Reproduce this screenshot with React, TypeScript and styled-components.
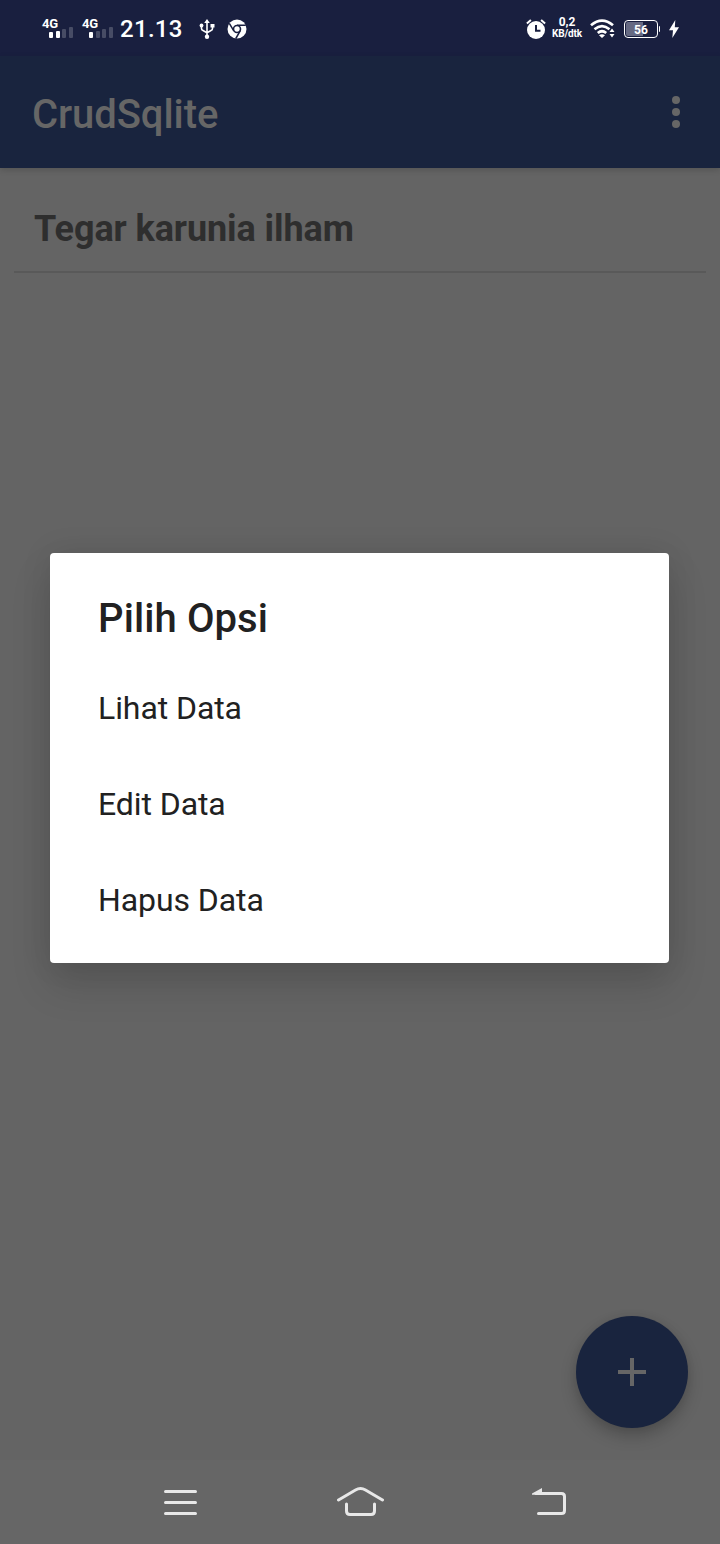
import React from "react";
import styled, { createGlobalStyle } from "styled-components";

const GlobalStyle = createGlobalStyle`
  *, *::before, *::after { box-sizing: border-box; }
  body { margin: 0; background: #646464; font-family: Roboto, sans-serif; }
  svg { display: block; flex: none; }
`;

const Screen = styled.div`
  position: relative;
  width: 720px;
  height: 1544px;
  display: flex;
  flex-direction: column;
  overflow: hidden;
  background: #646464;
`;

const StatusBar = styled.div`
  height: 56px;
  flex: none;
  display: flex;
  justify-content: space-between;
  align-items: center;
  padding: 1px 40px 0 42px;
  background: #191f3f;
  color: #fff;
`;

const StatusGroup = styled.div`
  display: flex;
  align-items: center;
`;

const Signal = styled.div`
  width: 32px;
  height: 22px;
  margin-right: 8px;
  padding-right: 1px;
  display: flex;
  flex-direction: column;
`;

const SignalLabel = styled.span`
  height: 11px;
  font-size: 13px;
  line-height: 11px;
  font-weight: 700;
  letter-spacing: -0.3px;
`;

const SignalBars = styled.div`
  display: flex;
  align-items: flex-end;
  justify-content: flex-end;
  gap: 2.7px;
  height: 11px;
  margin-top: -2px;
`;

const SignalBar = styled.span<{ $height: number; $on: boolean }>`
  width: 4px;
  height: ${(p) => p.$height}px;
  border-radius: 1px;
  background: ${(p) => (p.$on ? "#fff" : "#474c65")};
`;

const Clock = styled.span`
  width: 79px;
  margin-left: -2px;
  font-size: 24px;
  line-height: 28px;
  font-weight: 500;
  letter-spacing: 0.3px;
`;

const StatusIcons = styled.div`
  display: flex;
  gap: 12px;
  align-items: center;
`;

const NetSpeed = styled.div`
  width: 32px;
  margin: -1px 7px 0 5px;
  display: flex;
  flex-direction: column;
  align-items: center;
  font-weight: 700;
  white-space: nowrap;
`;

const SpeedValue = styled.span`
  font-size: 12px;
  line-height: 11px;
`;

const SpeedUnit = styled.span`
  font-size: 10px;
  line-height: 11px;
  letter-spacing: -0.1px;
`;

const Battery = styled.div`
  position: relative;
  width: 34px;
  height: 18px;
  margin: 0 10px 0 8px;
  padding: 1px;
  border: 1.5px solid #fff;
  border-radius: 4px;
  display: flex;
  align-items: center;
  justify-content: center;
  background: linear-gradient(to right, #666a83 56%, transparent 56%) content-box;
  font-size: 12px;
  font-weight: 700;
  line-height: 14px;

  &::after {
    content: "";
    position: absolute;
    right: -3px;
    top: 5px;
    width: 1.5px;
    height: 6px;
    border-radius: 0 1px 1px 0;
    background: #fff;
  }
`;

const BatteryLevel = styled.span`
  padding-top: 2px;
`;

const AppBar = styled.header`
  height: 112px;
  flex: none;
  position: relative;
  display: flex;
  align-items: center;
  justify-content: space-between;
  padding: 0 40px 0 32px;
  background: #19243e;
  color: #666;
  box-shadow: 0 2px 6px rgba(0, 0, 0, 0.16);
`;

const AppTitle = styled.h1`
  margin: 6px 0 0;
  font-size: 40px;
  line-height: 48px;
  font-weight: 500;
  letter-spacing: -0.08px;
`;

const Content = styled.main`
  flex: 1;
  padding: 0 14px;
`;

const ListRow = styled.div`
  height: 105px;
  padding: 40px 20px 0;
  border-bottom: 2px solid #595959;
  font-size: 36px;
  line-height: 42px;
  font-weight: 700;
  letter-spacing: -0.09px;
  color: #2e2e2e;
`;

const NavBar = styled.nav`
  height: 84px;
  flex: none;
  display: flex;
  align-items: center;
  padding-left: 163px;
  background: #666;
`;

const NavItem = styled.div<{ $before?: number }>`
  margin-left: ${(p) => p.$before ?? 0}px;
`;

const AddButton = styled.div`
  position: absolute;
  right: 32px;
  bottom: 116px;
  width: 112px;
  height: 112px;
  border-radius: 50%;
  display: flex;
  align-items: center;
  justify-content: center;
  background: #19243e;
  box-shadow: 0 8px 16px rgba(0, 0, 0, 0.22), 0 0 8px rgba(0, 0, 0, 0.06);
`;

const Dialog = styled.section`
  position: absolute;
  left: 50px;
  top: 553px;
  width: 619px;
  height: 410px;
  padding: 42px 48px 0;
  border-radius: 4px;
  background: #fff;
  color: #212121;
  box-shadow: 0 22px 40px rgba(0, 0, 0, 0.14), 0 0 32px rgba(0, 0, 0, 0.09);
`;

const DialogTitle = styled.h2`
  margin: 0 0 17px;
  font-size: 40px;
  line-height: 48px;
  font-weight: 500;
  letter-spacing: 0.1px;
`;

const Option = styled.div`
  height: 96px;
  display: flex;
  align-items: center;
  font-size: 32px;
  line-height: 38px;
  letter-spacing: -0.08px;
`;

const levels = [6, 7, 9, 11];

function SignalStrength({ active }: { active: number }) {
  return (
    <Signal>
      <SignalLabel>4G</SignalLabel>
      <SignalBars>
        {levels.map((h, i) => (
          <SignalBar key={h} $height={h} $on={i < active} />
        ))}
      </SignalBars>
    </Signal>
  );
}

const UsbIcon = () => (
  <svg width="16" height="20" viewBox="0 0 16 20" fill="none" stroke="#fff" strokeWidth="1.6">
    <path d="M8 3v14M2.500 7v2.500Q2.500 11 4 11.600L8 13.700M13.500 7v2.500Q13.500 11 12 11.600L8 13.700" />
    <path d="M8 0l2.800 4H5.200zM11.500 5h4v3.500h-4z" fill="#fff" stroke="none" />
    <circle cx="2.500" cy="6.500" r="1.900" fill="#fff" stroke="none" />
    <circle cx="8" cy="17.700" r="2.200" fill="#fff" stroke="none" />
  </svg>
);

const ChromeIcon = () => (
  <svg width="20" height="20" viewBox="0 0 20 20">
    <circle cx="10" cy="10" r="9.500" fill="#fff" />
    <circle cx="10" cy="10" r="3.500" fill="none" stroke="#191f3f" strokeWidth="1.600" />
    <path d="M10 6.300h8.800M6.800 11.900L2.300 4.300M13.200 11.900l-4.400 7.600" stroke="#191f3f" strokeWidth="1.500" />
  </svg>
);

const AlarmIcon = () => (
  <svg width="20" height="20" viewBox="0 0 20 20">
    <circle cx="10" cy="11" r="9" fill="#fff" />
    <path d="M.9 4.500l4-3.500M19.100 4.500l-4-3.500" stroke="#fff" strokeWidth="2" />
    <path d="M10 6v5.700h4.500" fill="none" stroke="#191f3f" strokeWidth="2" />
  </svg>
);

const WifiIcon = () => (
  <svg width="26" height="20" viewBox="0 0 26 20" fill="none" stroke="#fff" strokeWidth="2.700">
    <path d="M1 6.300Q12 -3 23 6.300M4.500 10.300Q12 4 19.500 10.300M7.800 14Q12 10.500 16.200 14" />
    <path d="M12 19l-3-2.800q3-2 6 0zM22 9.500l2.500 3.500h-5zM22 18.500l2.500-3.500h-5z" fill="#fff" stroke="none" />
  </svg>
);

const BoltIcon = () => (
  <svg width="12" height="18" viewBox="0 0 12 18">
    <path d="M7.300 0L1 10.300h4L4.300 18 11 7.300H6.800z" fill="#fff" />
  </svg>
);

const MoreIcon = () => (
  <svg width="8" height="32" viewBox="0 0 8 32" fill="#666">
    <circle cx="4" cy="4" r="4" />
    <circle cx="4" cy="16" r="4" />
    <circle cx="4" cy="28" r="4" />
  </svg>
);

const PlusIcon = () => (
  <svg width="28" height="28" viewBox="0 0 28 28">
    <path d="M14 0v28M0 14h28" stroke="#666" strokeWidth="4" />
  </svg>
);

const navStroke = {
  fill: "none",
  stroke: "#e8e8e8",
  strokeWidth: 3,
  strokeLinecap: "round" as const,
  strokeLinejoin: "round" as const,
};

const MenuIcon = () => (
  <svg width="35" height="32" viewBox="0 0 35 32" {...navStroke}>
    <path d="M2.500 5.500h30M2.500 16.500h30M2.500 27.500h30" />
  </svg>
);

const HomeIcon = () => (
  <svg width="48" height="32" viewBox="0 0 48 32" {...navStroke}>
    <path d="M2.500 14L19.500 4Q24.500 1 29.500 4L46.500 14" />
    <path d="M10.500 18V25Q10.500 28.500 14 28.500H35Q38.500 28.500 38.500 25V18" />
  </svg>
);

const BackIcon = () => (
  <svg width="36" height="32" viewBox="0 0 36 32" {...navStroke}>
    <path d="M4 7.500H29.500Q32.500 7.500 32.500 10.500V24.500Q32.500 27.500 29.500 27.500H6.500" />
    <path d="M0 8.700V7.500L10 2V8.700z" fill="#e8e8e8" stroke="none" />
  </svg>
);

export default function App() {
  return (
    <>
      <GlobalStyle />
      <Screen>
        <StatusBar>
          <StatusGroup>
            <SignalStrength active={2} />
            <SignalStrength active={1} />
            <Clock>21.13</Clock>
            <StatusIcons>
              <UsbIcon />
              <ChromeIcon />
            </StatusIcons>
          </StatusGroup>
          <StatusGroup>
            <AlarmIcon />
            <NetSpeed>
              <SpeedValue>0,2</SpeedValue>
              <SpeedUnit>KB/dtk</SpeedUnit>
            </NetSpeed>
            <WifiIcon />
            <Battery>
              <BatteryLevel>56</BatteryLevel>
            </Battery>
            <BoltIcon />
          </StatusGroup>
        </StatusBar>
        <AppBar>
          <AppTitle>CrudSqlite</AppTitle>
          <MoreIcon />
        </AppBar>
        <Content>
          <ListRow>Tegar karunia ilham</ListRow>
        </Content>
        <NavBar>
          <NavItem>
            <MenuIcon />
          </NavItem>
          <NavItem $before={138}>
            <HomeIcon />
          </NavItem>
          <NavItem $before={148}>
            <BackIcon />
          </NavItem>
        </NavBar>
        <AddButton>
          <PlusIcon />
        </AddButton>
        <Dialog>
          <DialogTitle>Pilih Opsi</DialogTitle>
          <Option>Lihat Data</Option>
          <Option>Edit Data</Option>
          <Option>Hapus Data</Option>
        </Dialog>
      </Screen>
    </>
  );
}
